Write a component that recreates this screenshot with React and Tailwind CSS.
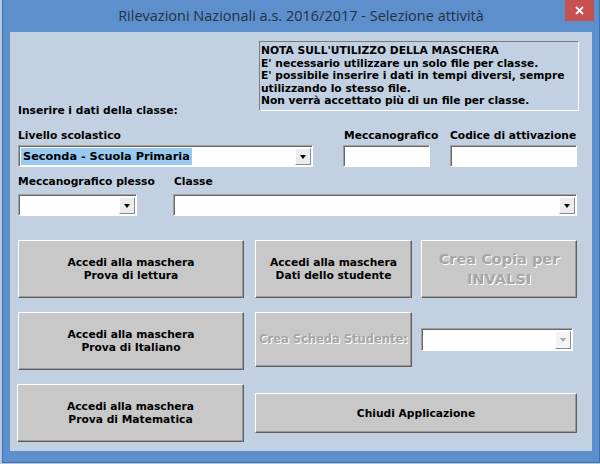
import React from 'react';

const Btn = ({ className = '', disabled, children }) => (
  <div
    className={`flex flex-col items-center justify-center text-center bg-[#c8c8c8] border border-t-white border-l-white border-r-[#5e5e5e] border-b-[#5e5e5e] shadow-[inset_-1px_-1px_0_#9a9a9a] ${
      disabled ? 'text-[#a6a6a6] [text-shadow:1px_1px_0_#ffffff]' : 'text-black'
    } ${className}`}
  >
    {children}
  </div>
);

const Field = ({ className = '', children }) => (
  <div
    className={`h-[22px] bg-white border border-t-[#a0a0a0] border-l-[#a0a0a0] border-b-white border-r-white shadow-[inset_1px_1px_0_#696969] ${className}`}
  >
    {children}
  </div>
);

const Combo = ({ className = '', disabled, children }) => (
  <Field className={`flex items-stretch ${className}`}>
    <div className="flex-1 flex items-center pl-[2px] pt-[1px] overflow-hidden">{children}</div>
    <div
      className={`mt-[2px] mb-[1px] mr-[1px] w-[16px] flex items-center justify-center border border-t-white border-l-white border-b-[#8a8a8a] border-r-[#8a8a8a] ${
        disabled ? 'bg-[#f4f4f4]' : 'bg-[#ececec]'
      }`}
    >
      <span
        className={`w-0 h-0 border-x-[3.5px] border-t-[4px] border-x-transparent ${
          disabled ? 'border-t-[#a8a8a8]' : 'border-t-black'
        }`}
      />
    </div>
  </Field>
);

export default function App() {
  return (
    <div className="w-[600px] h-[464px] bg-[#b9c9dc] overflow-hidden font-['DejaVu_Sans',Verdana,sans-serif] font-bold text-[10.7px] text-black">
      <div className="relative ml-[2px] w-[598px] h-[463px] border border-t-0 border-[#3e6fae] bg-[#5c8fcc] flex flex-col">
        {/* title bar */}
        <div className="h-[32px] flex items-center justify-center font-['Open_Sans',sans-serif] font-normal text-[14.5px] text-[#26313d]">
          Rilevazioni Nazionali a.s. 2016/2017 - Selezione attività
        </div>
        <div className="absolute top-0 right-[5px] w-[29px] h-[21px] bg-[#c75050] flex items-center justify-center">
          <svg width="9" height="9" viewBox="0 0 9 9">
            <path d="M1 1L8 8M8 1L1 8" stroke="#ffffff" strokeWidth="1.8" />
          </svg>
        </div>

        {/* client area */}
        <div className="ml-[7px] w-[582px] h-[419px] bg-[#c1d1e1] pl-[8px] leading-[14px]">
          <div className="flex h-[87px]">
            <div className="pt-[72px]">Inserire i dati della classe:</div>
            <div className="ml-auto mr-[13px] mt-[9px] w-[320px] h-[70px] border border-t-[#7c7c7c] border-l-[#7c7c7c] border-b-white border-r-white pl-[1px] pt-[3px] leading-[12.5px]">
              <div>NOTA SULL'UTILIZZO DELLA MASCHERA</div>
              <div>E' necessario utilizzare un solo file per classe.</div>
              <div>E' possibile inserire i dati in tempi diversi, sempre</div>
              <div>utilizzando lo stesso file.</div>
              <div>Non verrà accettato più di un file per classe.</div>
            </div>
          </div>

          <div className="mt-[10px] flex h-[14px]">
            <div className="w-[326px]">Livello scolastico</div>
            <div className="w-[106px]">Meccanografico</div>
            <div>Codice di attivazione</div>
          </div>
          <div className="mt-[2px] flex">
            <Combo className="w-[295px]">
              <span className="bg-[#99c9ef] px-[2px] text-[11.3px] leading-[17px]">Seconda - Scuola Primaria</span>
            </Combo>
            <Field className="ml-[30px] w-[87px]" />
            <Field className="ml-[20px] w-[127px]" />
          </div>

          <div className="mt-[8px] flex h-[14px]">
            <div className="w-[156px]">Meccanografico plesso</div>
            <div>Classe</div>
          </div>
          <div className="mt-[5px] flex">
            <Combo className="w-[119px]" />
            <Combo className="ml-[36px] w-[404px]" />
          </div>

          {/* buttons */}
          <div className="mt-[24px] flex leading-[13px]">
            <Btn className="w-[226px] h-[58px]">
              <div>Accedi alla maschera</div>
              <div>Prova di lettura</div>
            </Btn>
            <Btn className="ml-[11px] w-[157px] h-[58px]">
              <div>Accedi alla maschera</div>
              <div>Dati dello studente</div>
            </Btn>
            <Btn disabled className="ml-[9px] w-[156px] h-[58px] text-[14.5px] leading-[20px]">
              <div>Crea Copia per</div>
              <div>INVALSI</div>
            </Btn>
          </div>

          <div className="mt-[14px] flex items-start leading-[13px]">
            <Btn className="w-[226px] h-[58px]">
              <div>Accedi alla maschera</div>
              <div>Prova di Italiano</div>
            </Btn>
            <Btn disabled className="ml-[11px] w-[157px] h-[55px] text-[11.5px]">
              Crea Scheda Studente:
            </Btn>
            <Combo disabled className="ml-[9px] mt-[16px] w-[152px] h-[23px]" />
          </div>

          <div className="mt-[14px] flex items-start leading-[13px]">
            <Btn className="-ml-[1px] w-[227px] h-[58px]">
              <div>Accedi alla maschera</div>
              <div>Prova di Matematica</div>
            </Btn>
            <Btn className="ml-[11px] mt-[9px] w-[322px] h-[40px]">Chiudi Applicazione</Btn>
          </div>
        </div>
      </div>
    </div>
  );
}
